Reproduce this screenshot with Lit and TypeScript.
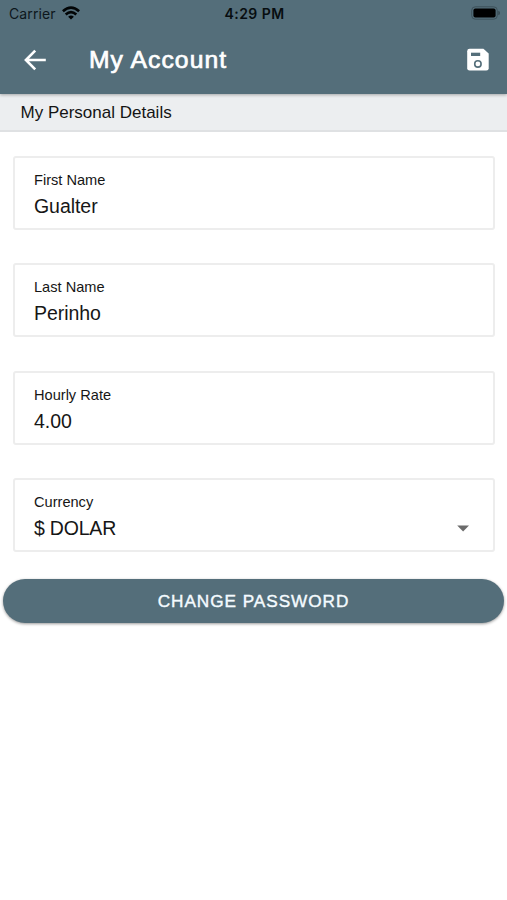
import { LitElement, html, css, svg, nothing } from "lit";
import { customElement } from "lit/decorators.js";

@customElement("status-bar")
class StatusBar extends LitElement {
  static styles = css`
    :host {
      display: grid;
      grid-template-columns: 1fr auto 1fr;
      align-items: center;
      box-sizing: border-box;
      height: 27px;
      padding: 1px 7px 0 9px;
      font: 400 14px/26px Inter, sans-serif;
      color: #0d171c;
    }
    .carrier { display: flex; align-items: center; letter-spacing: 0.1px; }
    .wifi { margin-left: 6px; margin-bottom: 2px; }
    .time { font-weight: 600; letter-spacing: 0.45px; color: #070d10; }
    .battery { justify-self: end; margin-bottom: 2px; }
    svg { display: block; }
  `;
  render() {
    return html`
      <div class="carrier">
        <span>Carrier</span>
        <svg class="wifi" width="18" height="14" viewBox="0 0 18 14" fill="none" stroke="#020506" stroke-width="2.6">
          <path d="M0.9 5.2Q9 -2.1 17.1 5.2" />
          <path d="M3.7 8.5Q9 3.8 14.3 8.5" />
          <path d="M9 13.6L6.1 10.7Q9 8.5 11.9 10.7Z" fill="#020506" stroke="none" />
        </svg>
      </div>
      <span class="time">4:29 PM</span>
      <svg class="battery" width="29" height="14" viewBox="0 0 29 14">
        <rect x="0.7" y="0.8" width="25.6" height="12.4" rx="3.6" fill="none" stroke="#3d515a" stroke-width="1" />
        <rect x="2.4" y="2.5" width="22.2" height="9" rx="2" fill="#000" />
        <path d="M27.4 4.8Q28.9 5.3 28.9 7T27.4 9.2Z" fill="#34464e" />
      </svg>
    `;
  }
}

@customElement("app-bar")
class AppBar extends LitElement {
  static styles = css`
    :host { display: flex; align-items: center; height: 65px; padding: 0 18px 0 23px; color: #fff; }
    svg { display: block; flex: none; }
    .title {
      flex: 1;
      margin-left: 42px;
      font-size: 24.7px;
      line-height: 30px;
      padding-top: 1px;
      letter-spacing: 1.05px;
      -webkit-text-stroke: 0.7px #fff;
    }
  `;
  render() {
    return html`
      <svg width="24" height="24" viewBox="0 0 24 24" fill="none" stroke="#fff" stroke-width="2.6">
        <path d="M22.8 12H3.4M12.2 2.6L2.9 12L12.2 21.4" />
      </svg>
      <span class="title">My Account</span>
      <svg width="22" height="24" viewBox="0 0 22 24">
        <path d="M2.6 0.8H16.4L21.7 5.6V20.2Q21.7 22.6 19.3 22.6H2.6Q0.2 22.6 0.2 20.2V3.2Q0.2 0.8 2.6 0.8Z" fill="#fff" />
        <rect x="4" y="4.7" width="9.2" height="3.3" fill="#546e7a" />
        <circle cx="10.9" cy="15.9" r="3.2" fill="none" stroke="#546e7a" stroke-width="1.6" />
      </svg>
    `;
  }
}

@customElement("outlined-field")
class OutlinedField extends LitElement {
  static properties = { label: {}, value: {}, select: { type: Boolean } };
  declare label: string;
  declare value: string;
  declare select: boolean;

  static styles = css`
    :host {
      display: flex;
      align-items: flex-start;
      justify-content: space-between;
      box-sizing: border-box;
      height: 74px;
      padding: 12px 23px 0 19px;
      border: 2px solid #ededed;
      border-radius: 3px;
      color: #161616;
    }
    .label { font-size: 14.6px; line-height: 20px; }
    .value { font-size: 19.5px; line-height: 24px; margin-top: 4px; letter-spacing: -0.05px; }
    .select { letter-spacing: -0.2px; }
    .arrow { display: block; margin-top: 33px; }
  `;
  render() {
    return html`
      <div>
        <div class="label">${this.label}</div>
        <div class="value ${this.select ? "select" : ""}">${this.value}</div>
      </div>
      ${this.select
        ? html`<svg class="arrow" width="13" height="7" viewBox="0 0 13 7">${svg`<path d="M0.2 0.4H12L6.1 6.6Z" fill="#6b6b6b" />`}</svg>`
        : nothing}
    `;
  }
}

@customElement("app-root")
class AppRoot extends LitElement {
  static styles = css`
    :host {
      display: block;
      height: 900px;
      overflow: hidden;
      background: #fff;
      font-family: "Liberation Sans", Arial, sans-serif;
    }
    .header {
      position: relative;
      height: 94px;
      background: #546e7a;
      box-shadow: 0 1px 3px rgba(0, 0, 0, 0.3);
    }
    .section {
      box-sizing: border-box;
      height: 38px;
      padding-left: 20.5px;
      border-bottom: 2px solid #dfe1e3;
      background: #eceef0;
      font-size: 17px;
      line-height: 37px;
      color: #141414;
    }
    .form { display: grid; gap: 33.5px; padding: 23.5px 12px 0 13px; }
    .button {
      display: block;
      box-sizing: border-box;
      width: calc(100% - 6px);
      height: 44px;
      margin: 27px 3px 0;
      padding: 0;
      border: 0;
      border-radius: 22px;
      background: #546e7a;
      box-shadow: 0 1px 3px rgba(0, 0, 0, 0.4);
      font: 17.2px/44px "Liberation Sans", Arial, sans-serif;
      letter-spacing: 0.95px;
      color: #f4fbff;
      -webkit-text-stroke: 0.4px #f4fbff;
    }
  `;
  render() {
    return html`
      <div class="header">
        <status-bar></status-bar>
        <app-bar></app-bar>
      </div>
      <div class="section">My Personal Details</div>
      <div class="form">
        <outlined-field label="First Name" value="Gualter"></outlined-field>
        <outlined-field label="Last Name" value="Perinho"></outlined-field>
        <outlined-field label="Hourly Rate" value="4.00"></outlined-field>
        <outlined-field label="Currency" value="$ DOLAR" select></outlined-field>
      </div>
      <button class="button">CHANGE PASSWORD</button>
    `;
  }
}
